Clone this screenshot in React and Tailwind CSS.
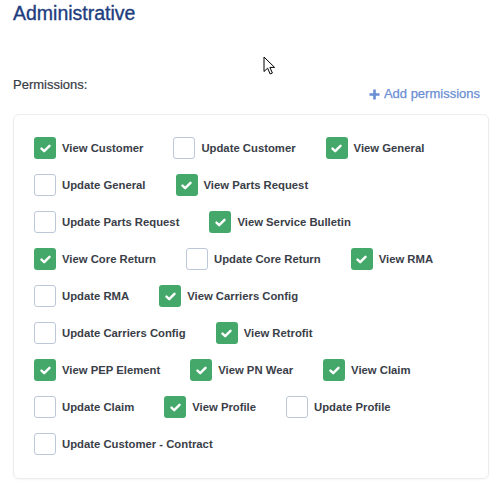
import React from "react";

const perms = [
  ["View Customer", true],
  ["Update Customer", false],
  ["View General", true],
  ["Update General", false],
  ["View Parts Request", true],
  ["Update Parts Request", false],
  ["View Service Bulletin", true],
  ["View Core Return", true],
  ["Update Core Return", false],
  ["View RMA", true],
  ["Update RMA", false],
  ["View Carriers Config", true],
  ["Update Carriers Config", false],
  ["View Retrofit", true],
  ["View PEP Element", true],
  ["View PN Wear", true],
  ["View Claim", true],
  ["Update Claim", false],
  ["View Profile", true],
  ["Update Profile", false],
  ["Update Customer - Contract", false],
];

function Box({ checked }) {
  if (checked) {
    return (
      <span className="flex h-[22px] w-[22px] shrink-0 items-center justify-center rounded-[3px] bg-[#44a86a]">
        <svg width="11" height="9" viewBox="0 0 11 9" fill="none">
          <path d="M1.5 4.6 L4.2 7.2 L9.5 1.8" stroke="white" strokeWidth="2.4" strokeLinecap="round" strokeLinejoin="round" />
        </svg>
      </span>
    );
  }
  return <span className="block h-[22px] w-[22px] shrink-0 rounded-[3px] border border-[#bcc7d8] bg-white" />;
}

export default function App() {
  return (
    <div className="relative h-[488px] w-[498px] bg-white pl-[13px] pr-[9px] font-['Liberation_Sans',Arial,sans-serif]">
      <h1 className="pt-[1px] text-[19.5px] leading-[24px] text-[#1d3d7e] [-webkit-text-stroke:0.35px_#1d3d7e]">Administrative</h1>
      <div className="mt-[52px] flex items-start justify-between">
        <span className="text-[13px] leading-[16px] text-[#363b45] [-webkit-text-stroke:0.2px_#363b45]">Permissions:</span>
        <span className="mt-[9px] mr-[9px] flex items-center gap-[4px] text-[13px] leading-[16px] text-[#6a8ed3] [-webkit-text-stroke:0.25px_#6a8ed3]">
          <svg width="11" height="11" viewBox="0 0 11 11">
            <path d="M5.5 0.5 V10.5 M0.5 5.5 H10.5" stroke="#6a8ed3" strokeWidth="2.6" />
          </svg>
          Add permissions
        </span>
      </div>
      <div className="mt-[12px] rounded-[6px] border border-[#ececee] pt-[22px] pb-[23px] pl-[20px] pr-[10px] shadow-[0_1px_2px_rgba(0,0,0,0.04)]">
        <div className="flex flex-wrap gap-y-[15px]">
          {perms.map(([label, checked]) => (
            <div key={label} className="mr-[30px] flex items-center gap-[6px]">
              <Box checked={checked} />
              <span className="text-[11.3px] leading-[14px] font-bold text-[#3a3e48]">{label}</span>
            </div>
          ))}
        </div>
      </div>
      <svg className="absolute left-[263px] top-[56px]" width="13" height="20" viewBox="0 0 13 20">
        <path d="M1 1 L1 15.5 L4.6 12.2 L7.2 18 L9.4 17 L6.9 11.4 L11.6 11.4 Z" fill="white" stroke="black" strokeWidth="1" strokeLinejoin="round" />
      </svg>
    </div>
  );
}
